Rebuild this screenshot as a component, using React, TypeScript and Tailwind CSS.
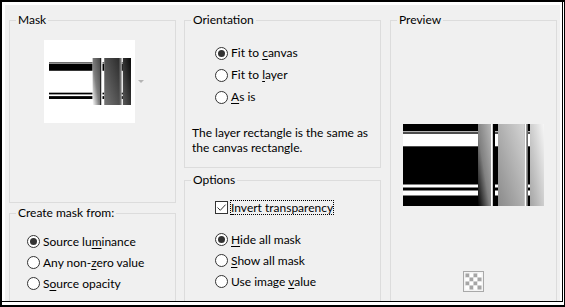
import React from "react";

type Kids = { children?: React.ReactNode };

const Key = ({ children }: Kids) => (
  <span className="underline underline-offset-[2px] decoration-[1px]">{children}</span>
);

const Radio = ({
  checked,
  children,
  row = "h-[22px]",
}: Kids & { checked?: boolean; row?: string }) => (
  <div className={`flex items-center ${row}`}>
    <span className="w-[13px] h-[13px] shrink-0 rounded-full border border-[#333333] bg-white flex items-center justify-center">
      {checked && <span className="w-[7px] h-[7px] rounded-full bg-[#333333]" />}
    </span>
    <span className="ml-[3px] whitespace-nowrap">{children}</span>
  </div>
);

const Group = ({
  title,
  className = "",
  children,
}: Kids & { title: string; className?: string }) => (
  <fieldset className={`border border-[#dcdcdc] min-w-0 ${className}`}>
    <legend className="ml-[6px] px-[2px] leading-[16px]">{title}</legend>
    {children}
  </fieldset>
);

// the mask picture, drawn once; the thumbnail is its inverse
const MaskArt = ({ w, h, id, invert }: { w: number; h: number; id: string; invert?: boolean }) => (
  <svg
    width={w}
    height={h}
    viewBox="0 0 141 82"
    preserveAspectRatio="none"
    className={invert ? "invert block" : "block"}
  >
    <defs>
      <linearGradient id={`${id}a`} x1="1" y1="0" x2="0" y2="1">
        <stop offset="0" stopColor="#b8b8b8" />
        <stop offset="0.55" stopColor="#808080" />
        <stop offset="1" stopColor="#000000" />
      </linearGradient>
      <linearGradient id={`${id}b`} x1="1" y1="0" x2="0" y2="1">
        <stop offset="0" stopColor="#d4d4d4" />
        <stop offset="1" stopColor="#8a8a8a" />
      </linearGradient>
      <linearGradient id={`${id}c`} x1="1" y1="0" x2="0" y2="1">
        <stop offset="0" stopColor="#f6f6f6" />
        <stop offset="1" stopColor="#a4a4a4" />
      </linearGradient>
    </defs>
    <rect width="141" height="82" fill="#000" />
    {[
      [7.3, 1],
      [9.7, 12.6],
      [60.5, 3],
      [66.5, 5],
    ].map(([y, hh]) => (
      <g key={y}>
        <rect x="0" y={y} width="75" height={hh} fill="#fff" />
        <rect x="92" y={y} width="3" height={hh} fill="#fff" />
        <rect x="125" y={y} width="2" height={hh} fill="#fff" />
      </g>
    ))}
    <rect x="75" y="0" width="13" height="82" fill={`url(#${id}a)`} />
    <rect x="88" y="0" width="1.8" height="82" fill="#fff" />
    <rect x="95" y="0" width="26.3" height="82" fill={`url(#${id}b)`} />
    <rect x="121.3" y="0" width="1.7" height="82" fill="#fff" />
    <rect x="123" y="0" width="1.7" height="82" fill="#9a9a9a" />
    <rect x="127" y="0" width="14" height="82" fill={`url(#${id}c)`} />
  </svg>
);

const Checker = () => (
  <svg width="21" height="21" viewBox="0 0 21 21" className="block">
    <rect x="0.5" y="0.5" width="20" height="20" fill="#f4f4f4" stroke="#a9a9a9" />
    {[0, 1, 2, 3].flatMap((r) =>
      [0, 1, 2, 3].map((c) => (
        <rect
          key={`${r}${c}`}
          x={2.5 + c * 4}
          y={2.5 + r * 4}
          width="4"
          height="4"
          fill={(r + c) % 2 ? "#ffffff" : "#a6a6a6"}
        />
      ))
    )}
  </svg>
);

export default function App() {
  return (
    <div className="w-[565px] h-[307px] bg-white border-black border-t-2 border-l-2 border-r border-b-2 flex text-[12px] text-black font-['Lato',sans-serif]">
      <div className="flex-1 flex mr-[1px] mb-[3px] border-r border-b border-black pt-[3px] pl-[3px] pr-[2px]">
        <div className="flex-1 bg-[#f0f0f0] overflow-hidden flex gap-[8px] pt-[7px] pl-[4px] pr-[2px]">
          {/* left column */}
          <div className="w-[167px] shrink-0 flex flex-col">
            <Group title="Mask" className="h-[191px]">
              <div className="flex items-center ml-[34px] mt-[12px]">
                <div className="w-[91px] h-[83px] bg-white flex items-center pl-[5px]">
                  <MaskArt w={82} h={47} id="m" invert />
                </div>
                <span className="ml-[3px] w-0 h-0 border-x-[3px] border-x-transparent border-t-[3px] border-t-[#b4b4b4]" />
              </div>
            </Group>
            <Group title="Create mask from:" className="mt-[2px] flex-1 -mb-[4px]">
              <div className="pl-[17px] mt-[10px]">
                <Radio checked row="h-[21px]">
                  Source lu<Key>m</Key>inance
                </Radio>
                <Radio row="h-[21px]">
                  Any non-<Key>z</Key>ero value
                </Radio>
                <Radio row="h-[21px]">
                  S<Key>o</Key>urce opacity
                </Radio>
              </div>
            </Group>
          </div>

          {/* middle column */}
          <div className="w-[197px] shrink-0 flex flex-col">
            <Group title="Orientation" className="h-[156px]">
              <div className="pl-[30px] mt-[14px]">
                <Radio checked>
                  Fit to <Key>c</Key>anvas
                </Radio>
                <Radio>
                  Fit to <Key>l</Key>ayer
                </Radio>
                <Radio>
                  <Key>A</Key>s is
                </Radio>
              </div>
              <p className="pl-[7px] mt-[17px] leading-[15px] whitespace-nowrap">
                The layer rectangle is the same as
                <br />
                the canvas rectangle.
              </p>
            </Group>
            <Group title="Options" className="mt-[4px] flex-1 -mb-[4px]">
              <div className="pl-[30px] mt-[8px]">
                <div className="flex items-center h-[22px]">
                  <span className="w-[13px] h-[13px] shrink-0 border border-[#333333] bg-white flex items-center justify-center">
                    <svg width="11" height="11" viewBox="0 0 11 11">
                      <path d="M1.5 5.5 L4.3 8.3 L9.6 2.6" fill="none" stroke="#333333" strokeWidth="1" />
                    </svg>
                  </span>
                  <span className="ml-[2px] border border-dotted border-black leading-[13px] whitespace-nowrap">
                    <Key>I</Key>nvert transparency
                  </span>
                </div>
                <div className="mt-[11px]">
                  <Radio checked row="h-[21px]">
                    <Key>H</Key>ide all mask
                  </Radio>
                  <Radio row="h-[21px]">
                    <Key>S</Key>how all mask
                  </Radio>
                  <Radio row="h-[21px]">
                    Use image <Key>v</Key>alue
                  </Radio>
                </div>
              </div>
            </Group>
          </div>

          {/* right column */}
          <div className="w-[167px] shrink-0 flex flex-col ml-[1px]">
            <Group title="Preview" className="flex-1 -mb-[4px]">
              <div className="flex flex-col items-center">
                <div className="mt-[96px]">
                  <MaskArt w={141} h={82} id="p" />
                </div>
                <div className="mt-[65px]">
                  <Checker />
                </div>
              </div>
            </Group>
          </div>
        </div>
      </div>
    </div>
  );
}
